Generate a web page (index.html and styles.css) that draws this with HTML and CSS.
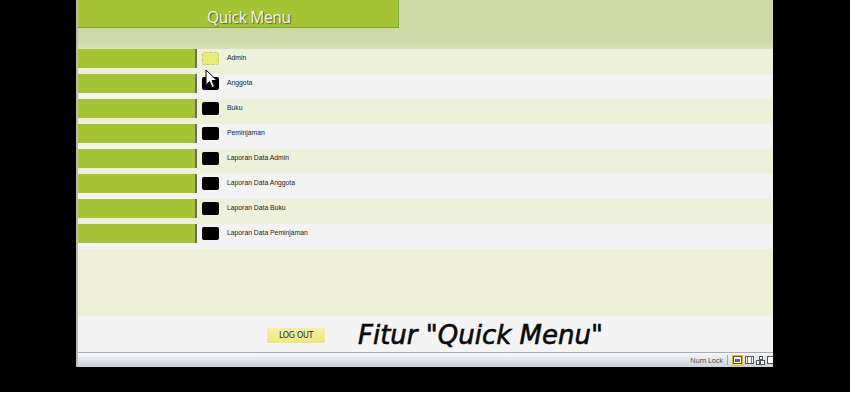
FILE: index.html
```html
<!DOCTYPE html>
<html>
<head>
<meta charset="utf-8">
<title>Quick Menu</title>
<link rel="stylesheet" href="styles.css">
</head>
<body>
<div class="screen">
  <div class="window">
    <div class="header">
      <div class="qm-bar"><span class="qm-title">Quick Menu</span></div>
    </div>
    <div class="menu">
      <div class="row odd"><div class="bar"></div><div class="ico ico-active"></div><span class="label">Admin</span></div>
      <div class="row even"><div class="bar"></div><div class="ico"></div><span class="label">Anggota</span></div>
      <div class="row odd"><div class="bar"></div><div class="ico"></div><span class="label">Buku</span></div>
      <div class="row even"><div class="bar"></div><div class="ico"></div><span class="label">Peminjaman</span></div>
      <div class="row odd"><div class="bar"></div><div class="ico"></div><span class="label">Laporan Data Admin</span></div>
      <div class="row even"><div class="bar"></div><div class="ico"></div><span class="label">Laporan Data Anggota</span></div>
      <div class="row odd"><div class="bar"></div><div class="ico"></div><span class="label">Laporan Data Buku</span></div>
      <div class="row even"><div class="bar"></div><div class="ico"></div><span class="label">Laporan Data Peminjaman</span></div>
    </div>
    <div class="filler"></div>
    <div class="footer">
      <button class="logout">LOG OUT</button>
      <span class="caption">Fitur "Quick Menu"</span>
    </div>
    <div class="status">
      <span class="numlock">Num Lock</span>
      <span class="sep"></span>
      <span class="sicon active">
        <svg width="9" height="8" viewBox="0 0 9 8"><rect x="0.5" y="0.5" width="8" height="7" fill="#fff" stroke="#555"/><rect x="2" y="3" width="5" height="3" fill="#666"/></svg>
      </span>
      <span class="sicon">
        <svg width="9" height="8" viewBox="0 0 9 8"><rect x="0.5" y="0.5" width="8" height="7" fill="#fff" stroke="#555"/><line x1="2.5" y1="1" x2="2.5" y2="7" stroke="#777"/><line x1="6.5" y1="1" x2="6.5" y2="7" stroke="#777"/></svg>
      </span>
      <span class="sicon">
        <svg width="9" height="9" viewBox="0 0 9 9"><rect x="3.5" y="0.5" width="3" height="3" fill="#fff" stroke="#555"/><rect x="0.5" y="4.5" width="3" height="4" fill="#fff" stroke="#555"/><rect x="4.5" y="4.5" width="4" height="4" fill="#fff" stroke="#555"/></svg>
      </span>
      <span class="sicon">
        <svg width="9" height="8" viewBox="0 0 9 8"><rect x="0.5" y="0.5" width="8" height="7" fill="#fff" stroke="#555"/></svg>
      </span>
    </div>
  </div>
  <svg class="cursor" width="13" height="20" viewBox="0 0 13 20"><path d="M1 1 L1 16 L4.5 12.5 L7 18.5 L9.5 17.5 L7 11.5 L12 11.5 Z" fill="#fff" stroke="#000" stroke-width="1" stroke-linejoin="round"/></svg>
</div>
</body>
</html>
```

FILE: styles.css
```css
html, body {
  margin: 0;
  padding: 0;
  background: #ffffff;
  font-family: "Liberation Sans", Arial, sans-serif;
}

.screen {
  position: relative;
  height: 392px;
  background: #000;
  display: flex;
  align-items: flex-start;
  padding-left: 76px;
  box-sizing: border-box;
}

.window {
  width: 697px;
  height: 367px;
  display: flex;
  flex-direction: column;
  border-left: 2px solid #b9bcb4;
  box-sizing: border-box;
  overflow: hidden;
  background: #f3f3f3;
}

.header {
  height: 49px;
  background: linear-gradient(to bottom, #d0d9a9 0%, #d0d9a9 85%, #d9e0bb 100%);
  flex: none;
}

.qm-bar {
  width: 321px;
  height: 28px;
  box-sizing: border-box;
  background: #a5c434;
  border-bottom: 1px solid #6ea93c;
  border-right: 1px solid #7fb03c;
  display: flex;
  align-items: center;
  padding-left: 129px;
  padding-top: 7px;
}

.qm-title {
  color: #f4f6ec;
  font-family: "Open Sans", "Noto Sans", sans-serif;
  font-size: 15.5px;
  letter-spacing: -0.3px;
  text-shadow: 1px 1px 1px #4f5a35;
}

.menu {
  display: flex;
  flex-direction: column;
  flex: none;
}

.row {
  height: 25px;
  display: flex;
  align-items: flex-start;
}

.row.odd { background: #eef1da; }
.row.even { background: #f3f3f3; }

.bar {
  width: 117px;
  height: 19px;
  background: #a5c434;
  border-right: 2px solid #6f705e;
  flex: none;
}

.ico {
  width: 17px;
  height: 13px;
  margin-left: 5px;
  margin-top: 3px;
  border-radius: 2px;
  background: #000;
  flex: none;
  box-sizing: border-box;
}

.ico.ico-active {
  background: #e6ea78;
  border: 1px dashed #c8cc60;
}

.label {
  margin-left: 8px;
  margin-top: 2px;
  line-height: 13px;
  font-size: 6.8px;
  color: #1a1a1a;
}

.filler {
  height: 67px;
  background: #eef1d8;
  flex: none;
}

.footer {
  height: 36px;
  flex: none;
  background: #f4f4f4;
  display: flex;
  align-items: center;
  padding-left: 189px;
}

.logout {
  width: 58px;
  height: 15px;
  margin: 3px 33px 0 0;
  padding: 0;
  border: none;
  border-radius: 1px;
  background: linear-gradient(to bottom, #f4f1a0, #ece87c);
  font-family: "DejaVu Sans", sans-serif;
  font-size: 8px;
  color: #2a2a2a;
  letter-spacing: -0.3px;
}

.caption {
  font-family: "DejaVu Sans", sans-serif;
  font-style: italic;
  font-size: 26px;
  color: #0a0a0a;
  -webkit-text-stroke: 0.6px #0a0a0a;
  line-height: 30px;
  margin-top: 1px;
}

.status {
  height: 15px;
  flex: none;
  box-sizing: border-box;
  border-top: 1px solid #a9abae;
  background: linear-gradient(to bottom, #f7f8fa, #dde0e7 60%, #cbcfd8);
  display: flex;
  align-items: center;
  justify-content: flex-end;
  margin-right: -4px;
}

.numlock {
  font-family: "Open Sans", sans-serif;
  font-size: 7px;
  color: #3c3c3c;
}

.sep {
  width: 1px;
  height: 10px;
  background: #a6a9b0;
  margin: 0 4px;
}

.sicon {
  width: 11px;
  height: 11px;
  display: flex;
  align-items: center;
  justify-content: center;
  box-sizing: border-box;
}

.sicon.active {
  background: #fce88a;
  border: 1px solid #e9b520;
  margin-right: 1px;
}

.cursor {
  position: absolute;
  left: 205px;
  top: 69px;
}
```
